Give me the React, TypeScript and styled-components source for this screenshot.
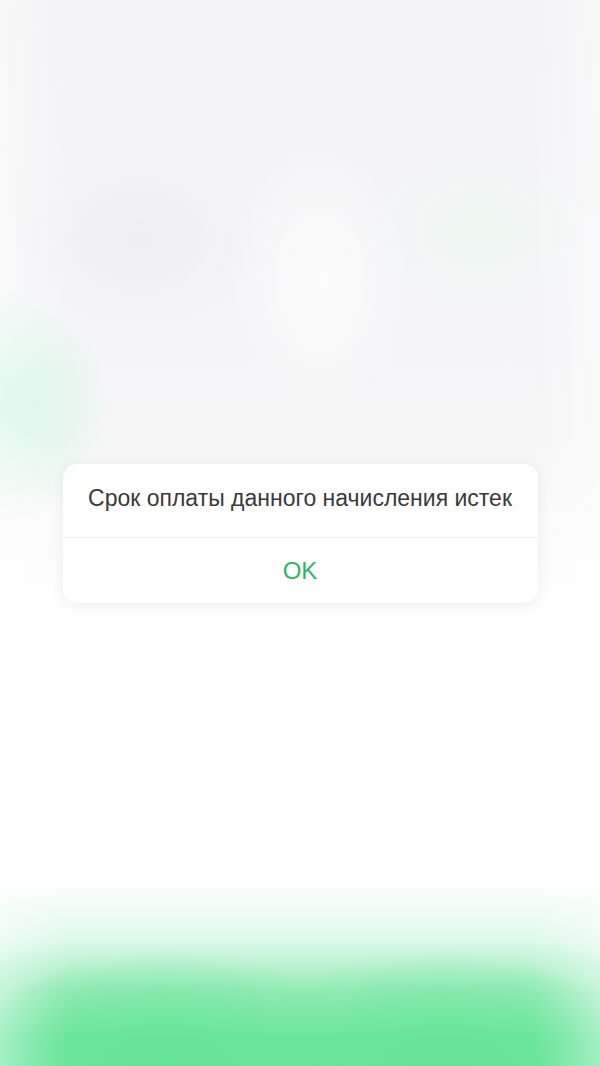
import styled, { createGlobalStyle } from 'styled-components'

const Global = createGlobalStyle`
  html, body {
    margin: 0;
    padding: 0;
    background: #ffffff;
  }
  * {
    box-sizing: border-box;
  }
`

// blurred app behind the alert
const Screen = styled.div`
  width: 600px;
  height: 1066px;
  display: flex;
  align-items: center;
  justify-content: center;
  overflow: hidden;
  font-family: "Liberation Sans", Arial, sans-serif;
  background:
    radial-gradient(ellipse 200px 110px at 165px 1060px, rgba(98, 226, 148, 0.75), rgba(98, 226, 148, 0) 100%),
    radial-gradient(ellipse 200px 110px at 445px 1060px, rgba(98, 226, 148, 0.75), rgba(98, 226, 148, 0) 100%),
    linear-gradient(90deg, rgba(255, 255, 255, 0.45) 0px, rgba(255, 255, 255, 0) 70px, rgba(255, 255, 255, 0) 530px, rgba(255, 255, 255, 0.45) 600px),
    linear-gradient(180deg, rgba(118, 230, 164, 0) 880px, rgba(200, 245, 220, 0.6) 940px, rgba(140, 234, 176, 0.9) 990px, rgba(112, 230, 160, 1) 1040px, rgba(110, 230, 160, 1) 1066px),
    radial-gradient(ellipse 110px 120px at 0px 405px, rgba(200, 247, 222, 0.95), rgba(200, 247, 222, 0) 100%),
    radial-gradient(ellipse 110px 80px at 480px 230px, rgba(238, 248, 242, 0.9), rgba(238, 248, 242, 0) 100%),
    radial-gradient(ellipse 120px 90px at 140px 240px, rgba(238, 238, 242, 0.9), rgba(238, 238, 242, 0) 100%),
    radial-gradient(ellipse 90px 140px at 320px 280px, rgba(255, 255, 255, 0.7), rgba(255, 255, 255, 0) 100%),
    linear-gradient(180deg, #f3f3f5 0px, #f5f5f7 330px, #f6f6f7 440px, #fbfbfb 520px, #ffffff 620px, #ffffff 1066px);
`

const Dialog = styled.div`
  width: 475px;
  background: #ffffff;
  border-radius: 14px;
  box-shadow: 0 2px 14px rgba(0, 0, 0, 0.07);
  display: flex;
  flex-direction: column;
  overflow: hidden;
`

const Message = styled.div`
  padding: 20px 16px 25px;
  font-size: 23px;
  line-height: 28px;
  color: #3a3a3c;
  text-align: center;
  border-bottom: 1px solid #f0f0f0;
`

const Action = styled.button`
  border: none;
  background: transparent;
  padding: 19px 16px 18px;
  font-family: inherit;
  font-size: 24px;
  line-height: 28px;
  color: #33b26a;
  text-align: center;
  cursor: pointer;
`

export default function App() {
  return (
    <>
      <Global />
      <Screen>
        <Dialog>
          <Message>Срок оплаты данного начисления истек</Message>
          <Action>OK</Action>
        </Dialog>
      </Screen>
    </>
  )
}
